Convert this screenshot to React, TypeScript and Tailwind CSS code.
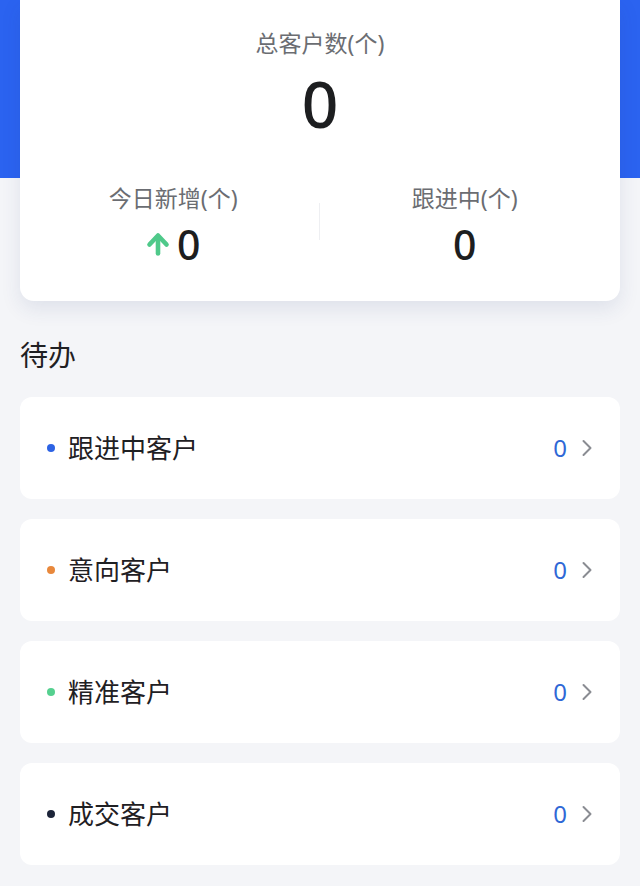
import React from 'react';

const items = [
  { label: '跟进中客户', count: 0, dot: 'bg-[#2d63e4]' },
  { label: '意向客户', count: 0, dot: 'bg-[#e8883c]' },
  { label: '精准客户', count: 0, dot: 'bg-[#55d08f]' },
  { label: '成交客户', count: 0, dot: 'bg-[#1c2439]' },
];

const Chevron = () => (
  <svg width="12" height="18" viewBox="0 0 12 18" fill="none">
    <path d="M2.5 2 L9.5 9 L2.5 16" stroke="#8a8c92" strokeWidth="2" strokeLinecap="round" strokeLinejoin="round" />
  </svg>
);

const UpArrow = () => (
  <svg width="24" height="24" viewBox="0 0 24 24" fill="none">
    <path d="M12 21.5 V5" stroke="#4fc98a" strokeWidth="4.6" strokeLinecap="round" />
    <path d="M3.5 12.5 L12 3.5 L20.5 12.5" stroke="#4fc98a" strokeWidth="4.6" strokeLinecap="round" strokeLinejoin="round" />
  </svg>
);

export default function App() {
  return (
    <div
      className="min-h-[886px] w-[640px] bg-[linear-gradient(to_bottom,#2b63f0_178px,#f4f5f8_178px)] pb-[21px]"
      style={{ fontFamily: '"Noto Sans", "Noto Sans CJK SC", sans-serif' }}
    >
      {/* summary card */}
      <div className="mx-5 rounded-b-[14px] bg-white pt-[27px] pb-[35px] shadow-[0_8px_20px_rgba(40,60,120,0.10)]">
        <div className="text-center text-[23px] leading-[32px] text-[#6b6d72]">总客户数(个)</div>
        <div className="mt-[9px] text-center text-[64px] leading-[72px] font-medium text-[#1d1e20]">0</div>
        <div className="mt-[43px] flex">
          <div className="flex flex-1 flex-col items-center pl-[8px]">
            <div className="text-[23px] leading-[30px] text-[#6b6d72]">今日新增(个)</div>
            <div className="mt-[9px] flex items-center gap-[7px]">
              <UpArrow />
              <span className="text-[41px] leading-[44px] font-medium text-[#1d1e20]">0</span>
            </div>
          </div>
          <div className="mt-[20px] h-[37px] w-px bg-[#eeeff2]" />
          <div className="flex flex-1 flex-col items-center pr-[10px]">
            <div className="text-[23px] leading-[30px] text-[#6b6d72]">跟进中(个)</div>
            <div className="mt-[9px] text-[41px] leading-[44px] font-medium text-[#1d1e20]">0</div>
          </div>
        </div>
      </div>

      {/* todo list */}
      <div className="mt-[36px] px-5 text-[28px] leading-[36px] text-[#1f2023]">待办</div>
      <div className="mt-[24px] flex flex-col gap-[20px] px-5">
        {items.map((item) => (
          <div key={item.label} className="flex h-[102px] items-center rounded-[12px] bg-white pl-[27px] pr-[27px]">
            <span className={`h-[8px] w-[8px] rounded-full ${item.dot}`} />
            <span className="ml-[13px] flex-1 text-[26px] leading-[34px] text-[#1f2023]">{item.label}</span>
            <span className="text-[24px] leading-[34px] text-[#2f68d6]">{item.count}</span>
            <span className="ml-[14px] flex items-center">
              <Chevron />
            </span>
          </div>
        ))}
      </div>
    </div>
  );
}
